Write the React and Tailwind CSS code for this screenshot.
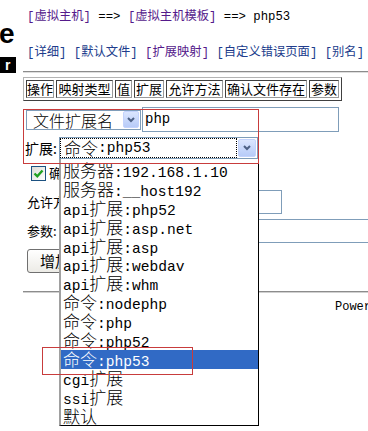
import React from "react";

const MONO = "font-['Liberation_Mono','Noto_Sans_CJK_SC',monospace]";

const options = [
  "服务器:192.168.1.10",
  "服务器:__host192",
  "api扩展:php52",
  "api扩展:asp.net",
  "api扩展:asp",
  "api扩展:webdav",
  "api扩展:whm",
  "命令:nodephp",
  "命令:php",
  "命令:php52",
  "命令:php53",
  "cgi扩展",
  "ssi扩展",
  "默认",
];

const columns = [
  { label: "操作", w: "w-[28px]" },
  { label: "映射类型", w: "w-[57px]" },
  { label: "值", w: "w-[17px]" },
  { label: "扩展", w: "w-[30px]" },
  { label: "允许方法", w: "w-[57px]" },
  { label: "确认文件存在", w: "w-[82px]" },
  { label: "参数", w: "w-[30px]" },
];

// splits CJK runs from latin runs so each gets its own font size
const Mixed = ({ text }) =>
  text
    .split(/([\u4e00-\u9fff]+)/)
    .filter(Boolean)
    .map((part, i) =>
      /[\u4e00-\u9fff]/.test(part) ? (
        <span key={i} className="font-['Noto_Sans_CJK_SC',sans-serif] font-light text-[17px]">
          {part}
        </span>
      ) : (
        <span key={i} className="font-['Liberation_Mono',monospace] text-[14.6px]">
          {part}
        </span>
      )
    );

const Chevron = () => (
  <svg width="10" height="8" viewBox="0 0 10 8">
    <polyline points="2,2 5,5 8,2" fill="none" stroke="#4d6185" strokeWidth="2" />
  </svg>
);

const ArrowBtn = ({ size }) => (
  <div
    className={
      size === "big"
        ? "w-[18px] h-[18px] rounded-[2px] border border-[#c3d3fd] bg-gradient-to-b from-[#dbe6fe] to-[#b7cbf8] flex items-center justify-center"
        : "w-[16px] h-[17px] rounded-[2px] border border-[#c3d3fd] bg-gradient-to-b from-[#dbe6fe] to-[#b7cbf8] flex items-center justify-center"
    }
  >
    <Chevron />
  </div>
);

const App = () => {
  return (
    <div className="relative w-[368px] h-[431px] overflow-hidden bg-white flex text-black">
      {/* left strip (cut logo) */}
      <div className="w-[23px] shrink-0 flex flex-col">
        <div className="mt-[20px] h-[28px] leading-[28px] text-[28px] font-bold font-['Liberation_Sans',Arial,sans-serif] -ml-[1px]">
          e
        </div>
        <div className="mt-[9px] w-[16px] h-[16px] bg-black text-white text-[14px] leading-[16px] font-bold font-['Liberation_Sans',Arial,sans-serif] pl-[5px]">
          r
        </div>
      </div>

      {/* main column */}
      <div className="flex flex-col shrink-0 w-[420px]">
        <div className={`mt-[9px] h-[16px] leading-[16px] pl-[4px] text-[12.3px] whitespace-nowrap ${MONO}`}>
          <span className="text-[#551a8b]">[虚拟主机]</span> ==&gt;{" "}
          <span className="text-[#551a8b]">[虚拟主机模板]</span> ==&gt; php53
        </div>
        <div className={`mt-[20px] h-[16px] leading-[16px] pl-[4px] text-[12.3px] whitespace-nowrap ${MONO}`}>
          <span className="text-[#203c8c]">[详细]</span>{" "}
          <span className="text-[#203c8c]">[默认文件]</span>{" "}
          <span className="text-[#551a8b]">[扩展映射]</span>{" "}
          <span className="text-[#203c8c]">[自定义错误页面]</span>{" "}
          <span className="text-[#203c8c]">[别名]</span>
        </div>

        <div className="mt-[10px] border-t border-t-[#8c8c8c] border-b border-b-[#dedede]" />

        {/* table header */}
        <div className="mt-[4px] self-start flex gap-[2px] p-[2px] border border-t-[#b4b4b4] border-l-[#b4b4b4] border-r-[#404040] border-b-[#404040]">
          {columns.map((c) => (
            <div
              key={c.label}
              className={`${c.w} h-[18px] flex items-center justify-center border border-t-[#404040] border-l-[#404040] border-r-[#9a9a9a] border-b-[#9a9a9a] text-[13px] leading-[16px] whitespace-nowrap font-['Noto_Sans_CJK_SC',sans-serif]`}
            >
              {c.label}
            </div>
          ))}
        </div>

        {/* row A */}
        <div className="mt-[6px] h-[25px] flex items-center">
          <div className="ml-[3px] w-[115px] h-[20px] border border-[#7f9db9] flex items-center justify-between pr-[1px]">
            <span className="pl-[6px] text-[16px] leading-[18px] font-light font-['Noto_Sans_CJK_SC',sans-serif]">
              文件扩展名
            </span>
            <ArrowBtn />
          </div>
          <div className="ml-[1px] w-[197px] h-[25px] border border-[#7f9db9] flex items-center pl-[2px] text-[14px] font-['Liberation_Mono',monospace]">
            php
          </div>
        </div>

        {/* row B */}
        <div className="mt-[5px] h-[22px] flex items-center">
          <span className="ml-[2px] w-[34px] text-[14px] leading-[16px] font-['Noto_Sans_CJK_SC',sans-serif]">
            扩展:
          </span>
          <div className="w-[199px] h-[22px] border border-[#7f9db9] flex items-center justify-between pr-[1px]">
            <div className="w-[177px] h-[20px] border border-dotted border-black flex items-center pl-[3px] leading-[18px] whitespace-nowrap">
              <Mixed text="命令:php53" />
            </div>
            <ArrowBtn size="big" />
          </div>
        </div>

        {/* checkbox row */}
        <div className="mt-[6px] h-[16px] flex items-center">
          <div className="ml-[8px] w-[15px] h-[15px] border border-[#1c5180] bg-gradient-to-br from-[#dcdcd7] to-white flex items-center justify-center">
            <svg width="11" height="11" viewBox="0 0 11 11">
              <polyline points="1.5,5.5 4.3,8.3 9.5,2.5" fill="none" stroke="#21a121" strokeWidth="2.4" />
            </svg>
          </div>
          <span className="ml-[3px] text-[13px] leading-[16px] font-['Noto_Sans_CJK_SC',sans-serif]">
            确认文件存在
          </span>
        </div>

        {/* allowed methods */}
        <div className="mt-[9px] h-[24px] flex items-center">
          <span className="ml-[4px] w-[65px] text-[13px] leading-[16px] font-['Noto_Sans_CJK_SC',sans-serif]">
            允许方法:
          </span>
          <div className="w-[190px] h-[24px] border border-[#7f9db9]" />
        </div>

        {/* params */}
        <div className="mt-[5px] h-[24px] flex items-center">
          <span className="ml-[4px] w-[33px] text-[13px] leading-[16px] font-['Noto_Sans_CJK_SC',sans-serif]">
            参数:
          </span>
          <div className="w-[360px] h-[24px] border border-[#7f9db9]" />
        </div>

        <div className="mt-[6px] h-[24px] flex">
          <button className="ml-[4px] w-[56px] h-[24px] rounded-[3px] border border-[#707070] bg-gradient-to-b from-white to-[#ecebe6] text-[15px] leading-[18px] font-['Noto_Sans_CJK_SC',sans-serif]">
            增加
          </button>
        </div>

        <div className="mt-[18px] border-t border-t-[#8c8c8c] border-b border-b-[#d0d0d0]" />

        <div className="mt-[7px] h-[14px] leading-[14px] pl-[312px] text-[12px] whitespace-nowrap font-['Liberation_Mono',monospace]">
          Powered by kangle
        </div>
      </div>

      {/* open dropdown list */}
      <div className="absolute left-[59px] top-[159px] w-[200px] bg-white border-l-2 border-l-[#a0a0a0] border-r border-r-black border-b border-b-black pt-[2px]">
        {options.map((o) => (
          <div
            key={o}
            className={
              o === "命令:php53"
                ? "h-[18.9px] leading-[18.9px] pl-[2px] whitespace-nowrap bg-[#316ac5] text-white"
                : "h-[18.9px] leading-[18.9px] pl-[2px] whitespace-nowrap"
            }
          >
            <Mixed text={o} />
          </div>
        ))}
      </div>

      {/* red annotation boxes */}
      <div className="absolute left-[23px] top-[109px] w-[236px] h-[55px] border border-[#c83c3c]" />
      <div className="absolute left-[42px] top-[347px] w-[151px] h-[28px] border border-[#c83c3c]" />
    </div>
  );
};

export default App;
